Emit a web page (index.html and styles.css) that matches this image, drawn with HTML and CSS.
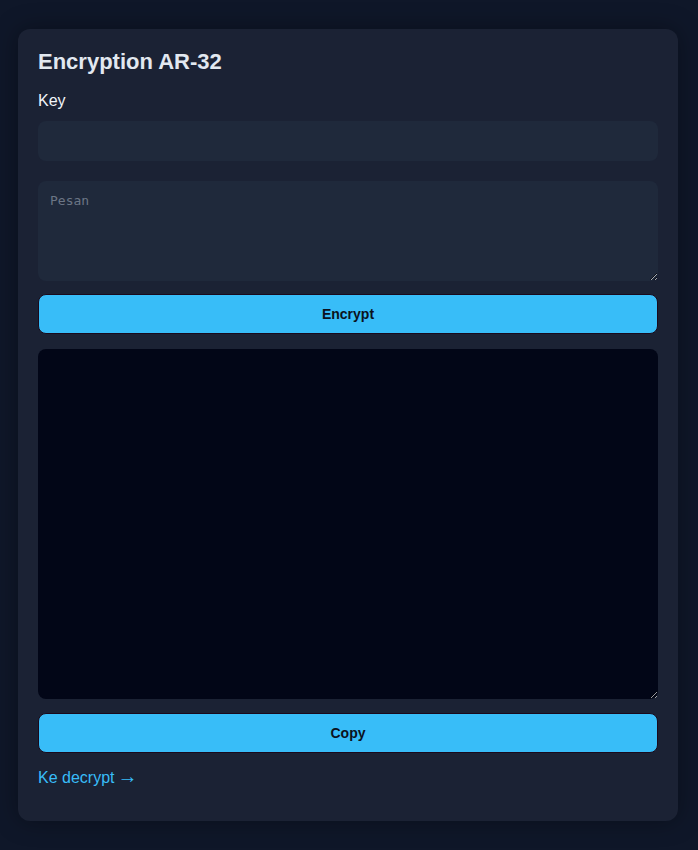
FILE: index.html
```html
<!DOCTYPE html>
<html lang="id">
<head>
<meta charset="utf-8">
<title>Encryption AR-32</title>
<link rel="stylesheet" href="styles.css">
</head>
<body>
<main class="card">
  <h2 class="title">Encryption AR-32</h2>
  <label class="label" for="key">Key</label>
  <input class="field" id="key" type="text">
  <textarea class="field area" placeholder="Pesan"></textarea>
  <button class="btn" type="button">Encrypt</button>
  <textarea class="output" readonly></textarea>
  <button class="btn" type="button">Copy</button>
  <a class="link" href="#">Ke decrypt<span class="arrow">→</span></a>
</main>
</body>
</html>
```

FILE: styles.css
```css
* { box-sizing: border-box; }

html, body {
  margin: 0;
  background: #0f1729;
}

body {
  padding: 29px 20px 29px 18px;
  font-family: "Liberation Sans", Arial, sans-serif;
  color: #e2e8f0;
}

.card {
  width: 660px;
  background: #1b2234;
  border-radius: 12px;
  padding: 20px 20px 34px;
  display: flex;
  flex-direction: column;
  box-shadow: 0 0 24px rgba(0, 0, 0, 0.35);
}

.title {
  margin: 0 0 18px;
  font-size: 22px;
  line-height: 25px;
  font-weight: bold;
  color: #e2e8f0;
}

.label {
  font-size: 16px;
  line-height: 18px;
  margin-bottom: 11px;
  color: #f1f5f9;
}

.field {
  display: block;
  width: 100%;
  height: 40px;
  border: none;
  border-radius: 8px;
  background: #1f293b;
  color: #e2e8f0;
  padding: 12px;
  margin: 0 0 20px;
  outline: none;
}

.area {
  height: 100px;
  margin-bottom: 13px;
  font-family: "DejaVu Sans Mono", monospace;
  font-size: 13px;
  resize: vertical;
}

.area::placeholder { color: #6b7585; }

.btn {
  display: block;
  width: 100%;
  height: 40px;
  border: 1px solid #1a0a1c;
  border-radius: 8px;
  background: #38bdf8;
  color: #0b1220;
  font-family: "Liberation Sans", Arial, sans-serif;
  font-size: 14px;
  font-weight: bold;
  margin-bottom: 15px;
  cursor: pointer;
}

.output {
  display: block;
  width: 100%;
  height: 350px;
  border: none;
  border-radius: 8px;
  background: #020617;
  color: #e2e8f0;
  margin: 0 0 14px;
  padding: 12px;
  outline: none;
  resize: vertical;
}

.link {
  font-size: 16px;
  line-height: 18px;
  color: #38bdf8;
  text-decoration: none;
  align-self: flex-start;
}

.arrow {
  margin-left: 3px;
  font-size: 20px;
  line-height: 16px;
}
```
